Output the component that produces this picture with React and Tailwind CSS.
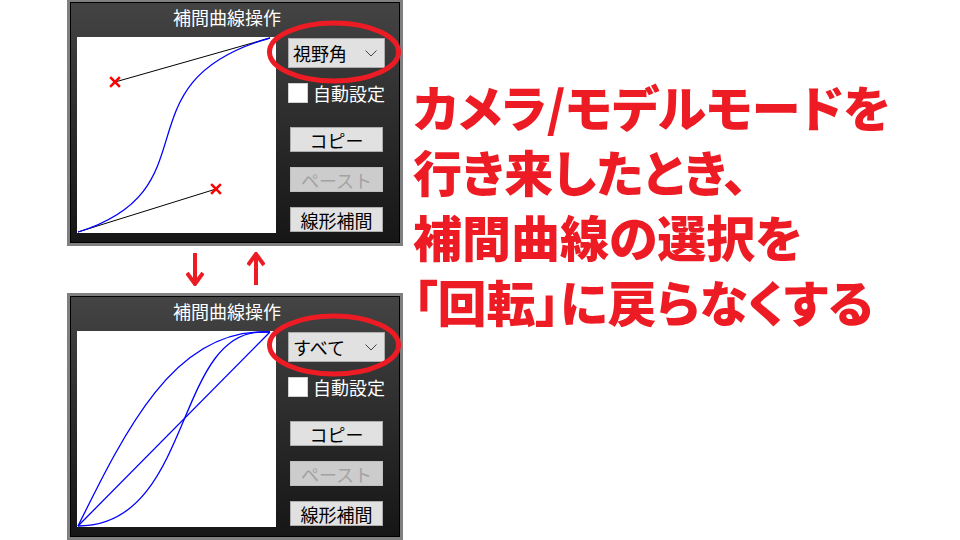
import React from "react";

const FONT = "font-['Noto_Sans_CJK_JP',sans-serif]";

function Cross({ x, y }) {
  const s = 4;
  return (
    <g stroke="#ff0000" strokeWidth="2.5" strokeLinecap="square">
      <line x1={x - s} y1={y - s} x2={x + s} y2={y + s} />
      <line x1={x - s} y1={y + s} x2={x + s} y2={y - s} />
    </g>
  );
}

function TopPlot() {
  const P0 = [1, 195], P1 = [139, 152], P2 = [38, 45], P3 = [193, 1];
  return (
    <svg width="199" height="196" className="block">
      <line x1={P0[0]} y1={P0[1]} x2={P1[0]} y2={P1[1]} stroke="#000" strokeWidth="1" />
      <line x1={P3[0]} y1={P3[1]} x2={P2[0]} y2={P2[1]} stroke="#000" strokeWidth="1" />
      <path
        d={`M${P0} C${P1} ${P2} ${P3}`}
        fill="none"
        stroke="#0000ff"
        strokeWidth="1.3"
      />
      <Cross x={P1[0]} y={P1[1]} />
      <Cross x={P2[0]} y={P2[1]} />
    </svg>
  );
}

function BottomPlot() {
  return (
    <svg width="199" height="196" className="block">
      <g fill="none" stroke="#0000ff" strokeWidth="1.3">
        <line x1="1" y1="195" x2="193" y2="1" />
        <path d="M1,195 C49,98 97,1 185,1 L193,1" />
        <path d="M1,195 C116,195 97,1 185,1 L193,1" />
      </g>
    </svg>
  );
}

function Chevron() {
  return (
    <svg width="12" height="7" className="block">
      <polyline points="0.5,0.5 6,6 11.5,0.5" fill="none" stroke="#444" strokeWidth="1" />
    </svg>
  );
}

function Btn({ children, disabled }) {
  return (
    <div
      className={
        "ml-[2px] w-[93px] h-[25px] flex items-center justify-center text-[18px] leading-none border " +
        (disabled
          ? "bg-[#cccccc] border-[#bfbfbf] text-[#a3a3a3]"
          : "bg-[#e1e1e1] border-[#adadad] text-black")
      }
    >
      {children}
    </div>
  );
}

function Panel({ label, plot }) {
  return (
    <div className="w-[336px] h-[247px] bg-[#808080] p-[3px] shrink-0">
      <div className="h-full border border-black bg-linear-to-b from-[#444444] to-[#161616] flex flex-col">
        <div className="h-[34px] pl-[102px] pt-[4px] text-white text-[18px] leading-[20px]">
          補間曲線操作
        </div>
        <div className="flex pl-[6px]">
          <div className="w-[199px] h-[196px] bg-white shrink-0">{plot}</div>
          <div className="ml-[12px] flex flex-col">
            <div className="mt-[1px] w-[97px] h-[30px] bg-[#e1e1e1] border border-[#adadad] flex items-center pl-[4px] pr-[7px] justify-between text-[18px] leading-none text-black">
              <span>{label}</span>
              <Chevron />
            </div>
            <div className="mt-[15px] h-[20px] flex items-center">
              <div className="w-[20px] h-[20px] bg-white border border-[#d0d0d0]" />
              <span className="ml-[5px] text-white text-[18px] leading-none">自動設定</span>
            </div>
            <div className="mt-[24px]">
              <Btn>コピー</Btn>
            </div>
            <div className="mt-[15px]">
              <Btn disabled>ペースト</Btn>
            </div>
            <div className="mt-[15px]">
              <Btn>線形補間</Btn>
            </div>
          </div>
        </div>
      </div>
    </div>
  );
}

export default function App() {
  return (
    <div className={"relative w-[960px] h-[540px] bg-white overflow-hidden flex " + FONT}>
      <div className="ml-[67px] w-[336px] -mt-px flex flex-col shrink-0">
        <Panel label="視野角" plot={<TopPlot />} />
        <div className="h-[47px] flex items-start pl-[119px] pt-[6px]">
          <svg width="18" height="34" className="block">
            <g fill="none" stroke="#ed1c24" strokeWidth="4">
              <line x1="9" y1="1" x2="9" y2="31" />
              <polyline points="1,21 9,32 17,21" />
            </g>
          </svg>
          <svg width="18" height="34" className="block ml-[43px]">
            <g fill="none" stroke="#ed1c24" strokeWidth="4">
              <line x1="9" y1="3" x2="9" y2="33" />
              <polyline points="1,13 9,2 17,13" />
            </g>
          </svg>
        </div>
        <Panel label="すべて" plot={<BottomPlot />} />
      </div>
      <div className="ml-[10px] mt-[73px] text-[#ed1c24] text-[49px] leading-[65px] font-black whitespace-nowrap [font-feature-settings:'palt']">
        <div>カメラ/モデルモードを</div>
        <div>行き来したとき、</div>
        <div>補間曲線の選択を</div>
        <div>「回転」に戻らなくする</div>
      </div>
      <svg className="absolute left-[264px] top-[17px]" width="140" height="70">
        <ellipse cx="70" cy="35" rx="64.5" ry="29" fill="none" stroke="#ed1c24" strokeWidth="5" />
      </svg>
      <svg className="absolute left-[264px] top-[310px]" width="140" height="70">
        <ellipse cx="70" cy="35" rx="64.5" ry="29" fill="none" stroke="#ed1c24" strokeWidth="5" />
      </svg>
    </div>
  );
}
